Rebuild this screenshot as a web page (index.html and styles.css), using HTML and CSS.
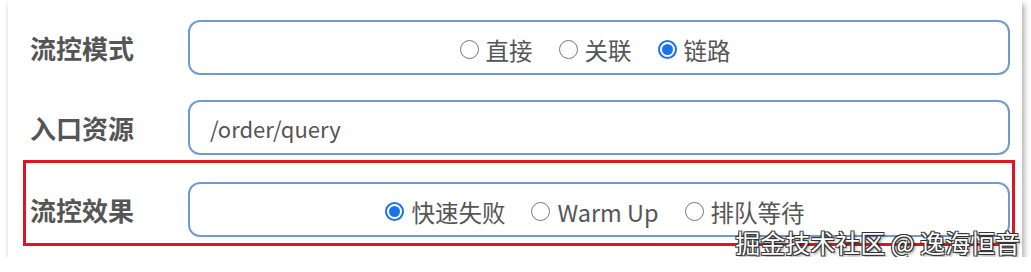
FILE: index.html
```html
<!DOCTYPE html>
<html>
<head>
  <title>流控规则</title>
  <link rel="stylesheet" href="styles.css">
</head>
<body>

  <div class="card">
    <div class="row">
      <label class="row-label">流控模式</label>
      <div class="field field-center">
        <label class="opt"><input type="radio" name="mode"> 直接</label>
        <label class="opt"><input type="radio" name="mode"> 关联</label>
        <label class="opt"><input type="radio" name="mode" checked> 链路</label>
      </div>
    </div>

    <div class="row row-gap">
      <label class="row-label">入口资源</label>
      <div class="field field-text">/order/query</div>
    </div>

    <div class="row row-marked">
      <label class="row-label">流控效果</label>
      <div class="field field-center">
        <label class="opt"><input type="radio" name="effect" checked> 快速失败</label>
        <label class="opt"><input type="radio" name="effect"> Warm Up</label>
        <label class="opt"><input type="radio" name="effect"> 排队等待</label>
      </div>
    </div>

    <div class="watermark">掘金技术社区 @ 逸海恒音</div>
  </div>

</body>
</html>
```

FILE: styles.css
```css
body {
  margin: 0;
  padding: 0;
  background-color: #fff;
  font-family: "Noto Sans CJK SC", "Noto Sans", sans-serif;
  color: #555;
}

.card {
  position: relative;
  margin-left: 8px;
  width: 1014px;
  height: 257px;
  padding-top: 20px;
  box-sizing: border-box;
  background-color: #fff;
  box-shadow: 2px 4px 6px rgba(0, 0, 0, 0.35);
}

.row {
  display: flex;
  align-items: center;
  padding-left: 22px;
  padding-right: 12px;
}

.row-gap {
  margin-top: 25px;
}

.row-label {
  width: 158px;
  flex-shrink: 0;
  font-size: 26px;
  font-weight: bold;
  color: #555;
}

.field {
  flex: 1;
  height: 55px;
  box-sizing: border-box;
  border: 2px solid #6f9ccc;
  border-radius: 12px;
  display: flex;
  align-items: center;
  font-size: 22px;
  color: #555;
}

.field-center {
  justify-content: center;
  font-size: 23.5px;
  padding-right: 8px;
}

.field-text {
  padding-left: 20px;
}

.row-marked {
  margin-top: 5px;
  margin-left: 15px;
  margin-right: 7px;
  padding: 19px 2px 6px 4px;
  border: 3px solid #dc1623;
}

.opt {
  display: flex;
  align-items: center;
  margin: 4px 13px 0;
  cursor: pointer;
}

.opt input[type="radio"] {
  appearance: none;
  width: 19px;
  height: 19px;
  margin: 0 7px 0 0;
  border: 1.5px solid #777;
  border-radius: 50%;
  position: relative;
  background-color: #fff;
}

.opt input[type="radio"]:checked {
  border: 2px solid #1a73e8;
}

.opt input[type="radio"]:checked::before {
  content: '';
  position: absolute;
  top: 2px;
  left: 2px;
  width: 11px;
  height: 11px;
  border-radius: 50%;
  background-color: #1a73e8;
}

.watermark {
  position: absolute;
  right: 2px;
  bottom: -3px;
  font-size: 25px;
  color: #fff;
  text-shadow: -1px -1px 0 #333, 1px -1px 0 #333, -1px 1px 0 #333, 1px 1px 0 #333, 2px 2px 3px rgba(0, 0, 0, 0.5);
}
```
